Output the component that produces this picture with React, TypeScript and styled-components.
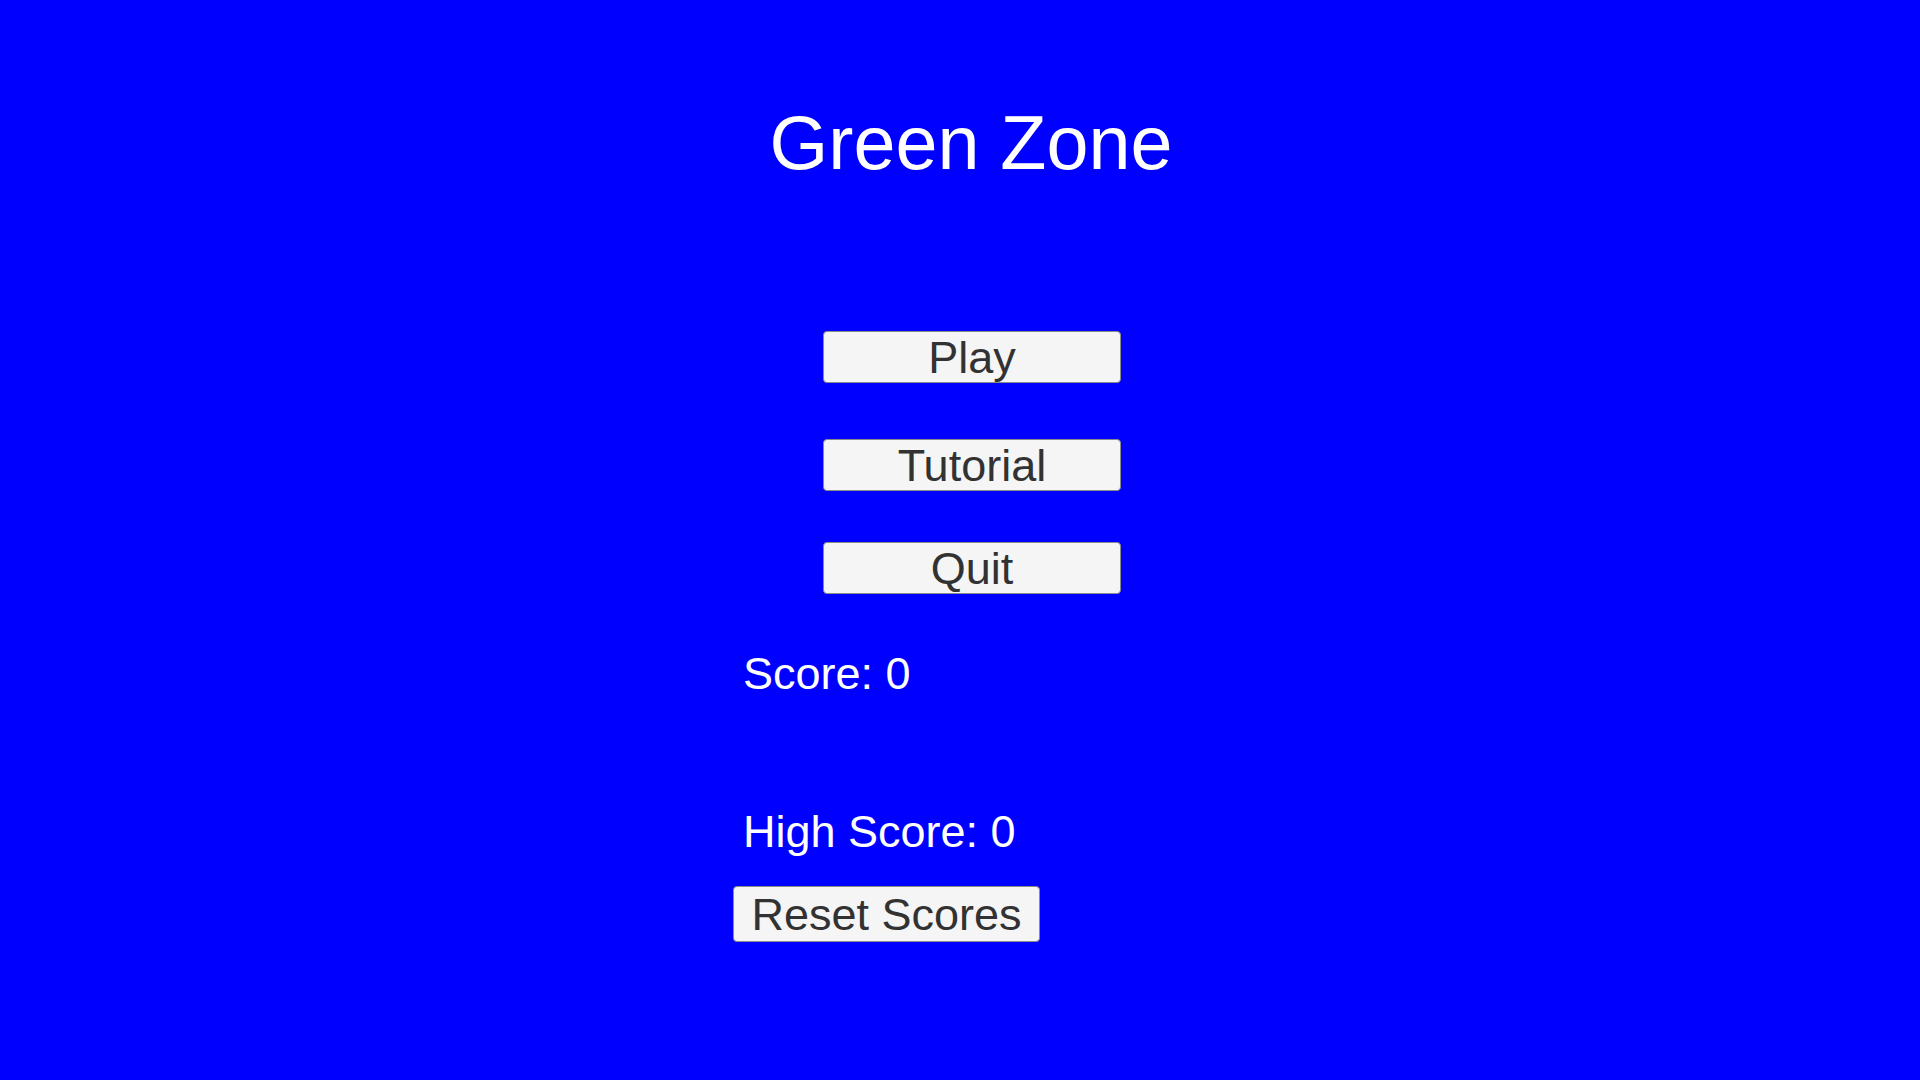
import React from 'react';
import styled, { createGlobalStyle } from 'styled-components';

const GlobalStyle = createGlobalStyle`
  html, body {
    margin: 0;
    padding: 0;
    background: #0000ff;
  }
  body {
    font-family: "Liberation Sans", Arial, sans-serif;
  }
`

const Screen = styled.div`
  width: 1920px;
  height: 1080px;
  background: #0000ff;
  overflow: hidden;
`

const Stage = styled.div`
  width: 478px;
  margin-left: 733px;
  padding-top: 106px;
  display: flex;
  flex-direction: column;
`

const Title = styled.h1`
  margin: 0 0 0 -2px;
  font-size: 75.5px;
  line-height: 75px;
  font-weight: 400;
  color: #ffffff;
  text-align: center;
  white-space: nowrap;
`

const Menu = styled.div`
  display: flex;
  flex-direction: column;
  align-items: center;
  margin-top: 150px;
`

const MenuButton = styled.button<{ $top?: number }>`
  box-sizing: border-box;
  width: 298px;
  height: 52px;
  margin-top: ${p => p.$top || 0}px;
  padding: 1px 0 0;
  display: flex;
  align-items: center;
  justify-content: center;
  background: #f5f5f5;
  border: 1px solid #8a8a8a;
  border-radius: 4px;
  color: #323232;
  font-family: "Liberation Sans", Arial, sans-serif;
  font-size: 45px;
  line-height: 45px;
`

const ScoreLine = styled.div<{ $top: number }>`
  margin-top: ${p => p.$top}px;
  padding-left: 10px;
  color: #ffffff;
  font-size: 45px;
  line-height: 45px;
  white-space: nowrap;
`

const ResetButton = styled(MenuButton)`
  width: 307px;
  height: 56px;
  padding: 1px 0 0;
`

const App = () => {
  return (
    <Screen>
      <GlobalStyle />
      <Stage>
        <Title>Green Zone</Title>
        <Menu>
          <MenuButton>Play</MenuButton>
          <MenuButton $top={56}>Tutorial</MenuButton>
          <MenuButton $top={51}>Quit</MenuButton>
        </Menu>
        <ScoreLine $top={57}>Score: 0</ScoreLine>
        <ScoreLine $top={113}>High Score: 0</ScoreLine>
        <ResetButton $top={32}>Reset Scores</ResetButton>
      </Stage>
    </Screen>
  )
}

export default App;
